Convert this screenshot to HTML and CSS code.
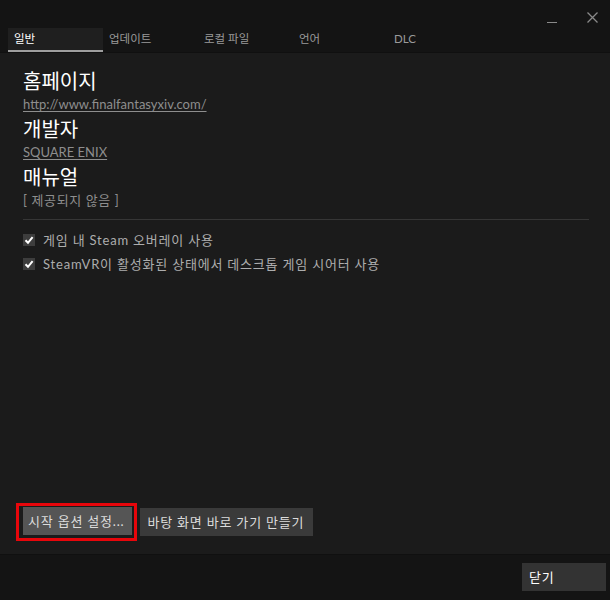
FILE: index.html
```html
<!DOCTYPE html>
<html lang="ko">
<head>
<meta charset="utf-8">
<link rel="stylesheet" href="styles.css">
</head>
<body>
<div class="window">
  <header class="titlebar">
    <div class="controls">
      <span class="ctl-min"></span>
      <svg class="ctl-close" width="11" height="11" viewBox="0 0 11 11"><path d="M0.5 0.5 L10.5 10.5 M10.5 0.5 L0.5 10.5" stroke="#8a8a8a" stroke-width="1.3" fill="none"/></svg>
    </div>
    <nav class="tabs">
      <div class="tab active">일반</div>
      <div class="tab">업데이트</div>
      <div class="tab">로컬 파일</div>
      <div class="tab">언어</div>
      <div class="tab">DLC</div>
    </nav>
  </header>
  <main class="content">
    <h2 class="label">홈페이지</h2>
    <a class="link">http://www.finalfantasyxiv.com/</a>
    <h2 class="label">개발자</h2>
    <a class="link">SQUARE ENIX</a>
    <h2 class="label">매뉴얼</h2>
    <div class="muted">[ 제공되지 않음 ]</div>
    <hr class="sep">
    <label class="check"><span class="box"><svg width="12" height="12" viewBox="0 0 12 12"><path d="M2.5 6.2 L5 8.8 L9.6 3.2" stroke="#fff" stroke-width="2" fill="none"/></svg></span>게임 내 Steam 오버레이 사용</label>
    <label class="check"><span class="box"><svg width="12" height="12" viewBox="0 0 12 12"><path d="M2.5 6.2 L5 8.8 L9.6 3.2" stroke="#fff" stroke-width="2" fill="none"/></svg></span>SteamVR이 활성화된 상태에서 데스크톱 게임 시어터 사용</label>
    <div class="actions">
      <span class="highlight"><button class="btn btn-light">시작 옵션 설정...</button></span>
      <button class="btn">바탕 화면 바로 가기 만들기</button>
    </div>
  </main>
  <footer class="footer">
    <button class="btn btn-close">닫기</button>
  </footer>
</div>
</body>
</html>
```
FILE: styles.css
```css
html, body {
  margin: 0;
  padding: 0;
  background: #141414;
}
body {
  font-family: "Lato", "Noto Sans CJK KR", "Noto Sans", sans-serif;
  color: #d8d8d8;
}
.window {
  width: 610px;
  height: 600px;
  display: flex;
  flex-direction: column;
}
.titlebar {
  height: 52px;
  background: #141414;
  display: flex;
  flex-direction: column;
  border-bottom: 1px solid #101010;
}
.controls {
  height: 28px;
  display: flex;
  justify-content: flex-end;
  align-items: flex-start;
  padding-right: 12px;
  box-sizing: border-box;
}
.ctl-min {
  width: 10px;
  height: 1px;
  background: #8a8a8a;
  margin-top: 22px;
  margin-right: 30px;
}
.ctl-close {
  margin-top: 12px;
}
.tabs {
  display: flex;
  padding-left: 8px;
  height: 24px;
}
.tab {
  width: 95px;
  box-sizing: border-box;
  padding-left: 6px;
  font-size: 11.5px;
  line-height: 22px;
  color: #9a9a9a;
  border-bottom: 2px solid transparent;
}
.tab.active {
  background: #1f1f1f;
  color: #ffffff;
  border-bottom-color: #9e9e9e;
}
.content {
  flex: 1;
  background: #1b1b1b;
  padding: 15px 21px 13px 23px;
  display: flex;
  flex-direction: column;
  align-items: flex-start;
}
.label {
  margin: 0;
  font-family: "Noto Sans CJK KR", sans-serif;
  font-size: 20px;
  font-weight: 400;
  line-height: 25px;
  color: #ffffff;
}
.link {
  font-size: 13px;
  line-height: 23px;
  color: #8e8e8e;
  text-decoration: underline;
  text-underline-offset: 2px;
}
.muted {
  font-size: 13px;
  line-height: 23px;
  letter-spacing: 0.6px;
  color: #8e8e8e;
}
.sep {
  align-self: stretch;
  border: 0;
  height: 1px;
  background: #363636;
  margin: 7px 0 8px;
}
.check {
  display: flex;
  align-items: center;
  font-size: 13px;
  line-height: 24px;
  letter-spacing: 0.8px;
  color: #adadad;
}
.box {
  width: 12px;
  height: 12px;
  background: #3d3d3d;
  margin-right: 8px;
  display: flex;
}
.actions {
  margin-top: auto;
  display: flex;
  align-items: center;
  margin-left: -7px;
}
.highlight {
  display: flex;
  border: 3px solid #e8060b;
  padding: 1px 2px 3px 4px;
  margin-right: 3px;
}
.btn {
  font-family: "Lato", "Noto Sans CJK KR", sans-serif;
  font-size: 13px;
  letter-spacing: 0.8px;
  height: 28px;
  line-height: 28px;
  padding: 0 9px 0 7px;
  border: 0;
  background: #3a3a3a;
  color: #dcdcdc;
  display: block;
}
.btn-light {
  background: #555555;
  padding: 0 8px 0 5px;
}
.footer {
  height: 46px;
  background: #141414;
  border-top: 1px solid #101010;
  display: flex;
  justify-content: flex-end;
  align-items: flex-start;
  padding: 8px 4px 0 0;
  box-sizing: border-box;
}
.btn-close {
  width: 84px;
  text-align: left;
  background: #333333;
  color: #ffffff;
}
```
